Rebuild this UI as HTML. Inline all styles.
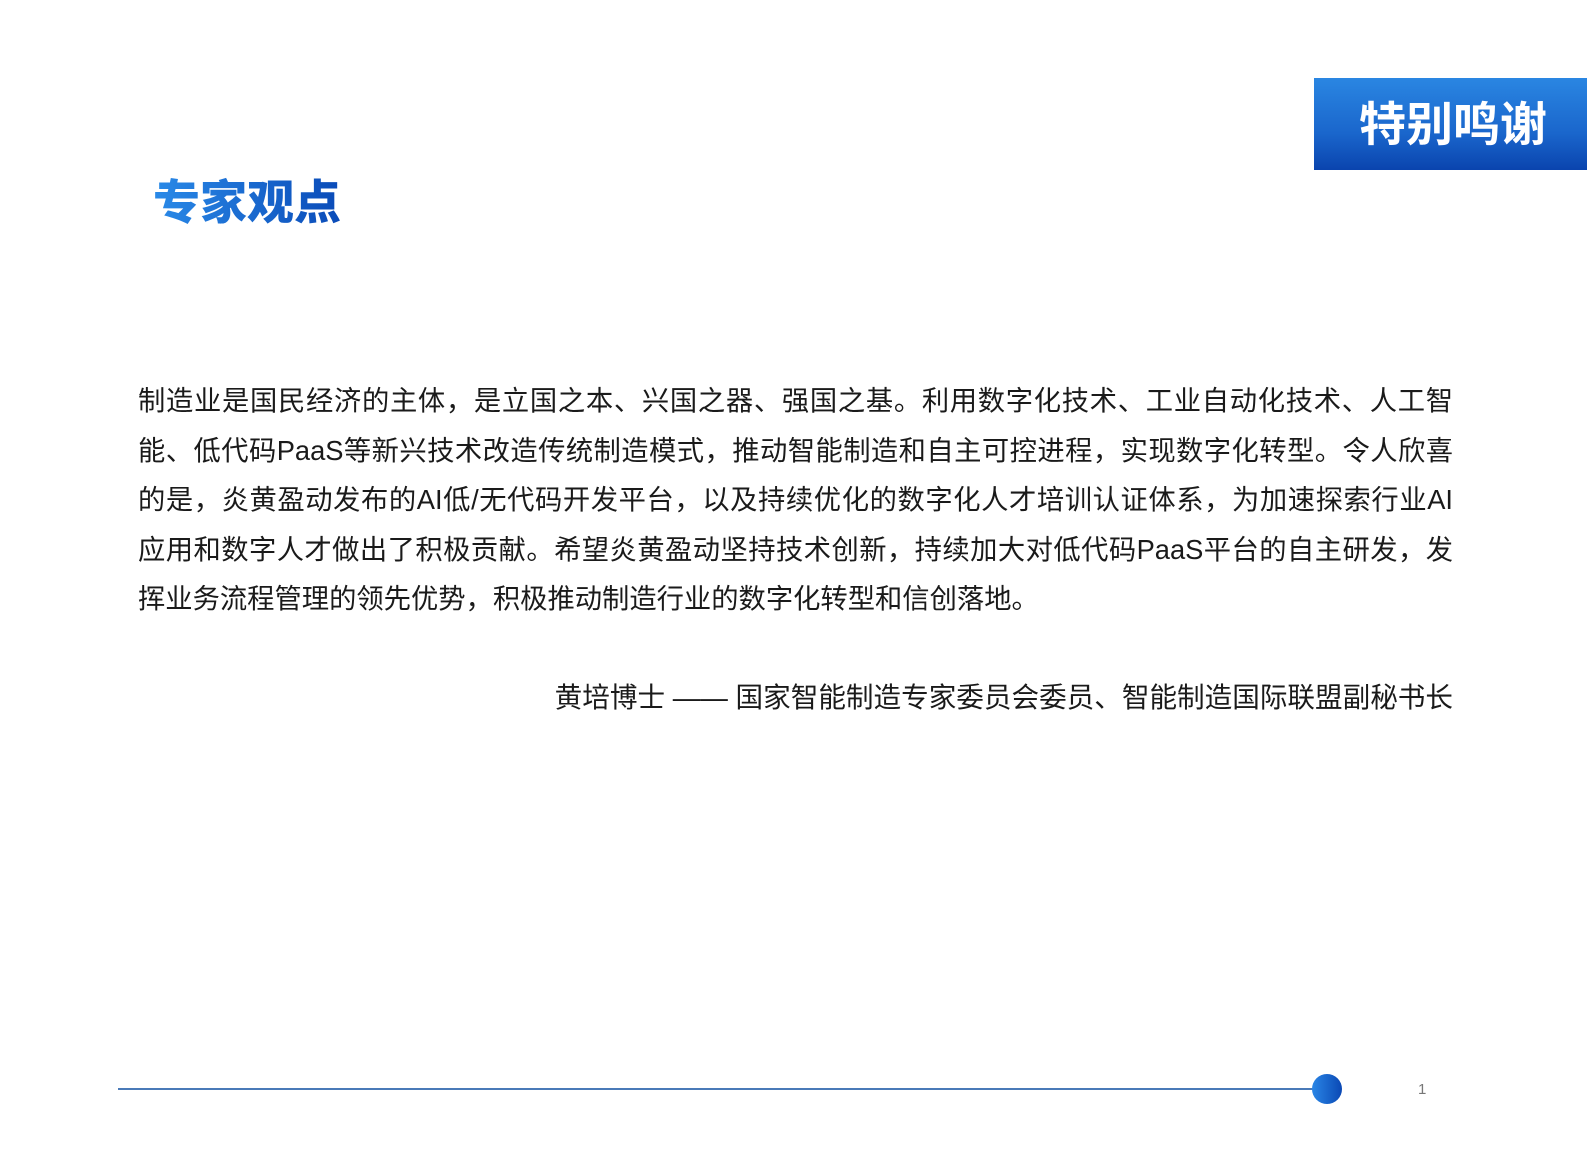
<!DOCTYPE html>
<html><head><meta charset="utf-8"><style>
body{margin:0;width:1587px;height:1169px;background:#fff;position:relative;overflow:hidden;font-family:"Liberation Sans","Noto Sans CJK SC",sans-serif;}
.banner{position:absolute;left:1314px;top:78px;width:273px;height:92px;background:linear-gradient(#2a86e2,#1a66cc 60%,#0a44ae);}
.banner span{position:absolute;left:45px;top:18px;font-size:47px;font-weight:bold;color:#fff;line-height:57px;}
.title{position:absolute;left:153px;top:174px;font-size:47px;font-weight:900;line-height:57px;background:linear-gradient(90deg,#2a8ae8,#0a4bb8);-webkit-background-clip:text;background-clip:text;color:transparent;}
.body{position:absolute;left:138px;top:376px;width:1315px;font-size:27.3px;line-height:49.6px;color:#1a1a1a;}
.body div{text-align:justify;text-align-last:justify;white-space:nowrap;}
.body div.last{text-align-last:left;}
.attr{position:absolute;right:134px;top:673px;font-size:27.6px;line-height:49.6px;color:#1a1a1a;white-space:nowrap;}
.line{position:absolute;left:118px;top:1088px;width:1200px;height:2px;background:#4a7ab8;}
.dot{position:absolute;left:1312px;top:1074px;width:30px;height:30px;border-radius:50%;background:linear-gradient(90deg,#2a86e6,#0a48b4);}
.pn{position:absolute;left:1418px;top:1081px;font-size:15px;color:#777;}
</style></head><body>
<div class="banner"><span>特别鸣谢</span></div>
<div class="title">专家观点</div>
<div class="body">
<div>制造业是国民经济的主体，是立国之本、兴国之器、强国之基。利用数字化技术、工业自动化技术、人工智</div>
<div>能、低代码PaaS等新兴技术改造传统制造模式，推动智能制造和自主可控进程，实现数字化转型。令人欣喜</div>
<div>的是，炎黄盈动发布的AI低/无代码开发平台，以及持续优化的数字化人才培训认证体系，为加速探索行业AI</div>
<div>应用和数字人才做出了积极贡献。希望炎黄盈动坚持技术创新，持续加大对低代码PaaS平台的自主研发，发</div>
<div class="last">挥业务流程管理的领先优势，积极推动制造行业的数字化转型和信创落地。</div>
</div>
<div class="attr">黄培博士 —— 国家智能制造专家委员会委员、智能制造国际联盟副秘书长</div>
<div class="line"></div>
<div class="dot"></div>
<div class="pn">1</div>
</body></html>
